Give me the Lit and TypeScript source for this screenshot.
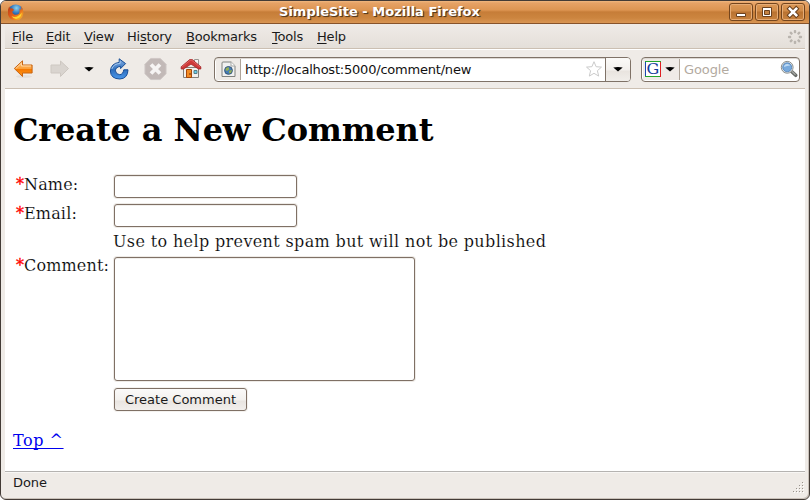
import { LitElement, html, css, svg } from "lit";
import { customElement, property } from "lit/decorators.js";

interface MenuEntry {
  before: string;
  key: string;
  after: string;
  width: number;
}

const MENUS: MenuEntry[] = [
  { before: "", key: "F", after: "ile", width: 34 },
  { before: "", key: "E", after: "dit", width: 38 },
  { before: "", key: "V", after: "iew", width: 43 },
  { before: "Hi", key: "s", after: "tory", width: 59 },
  { before: "", key: "B", after: "ookmarks", width: 86 },
  { before: "", key: "T", after: "ools", width: 45 },
  { before: "", key: "H", after: "elp", width: 40 },
];

@customElement("title-bar")
export class TitleBar extends LitElement {
  static styles = css`
    :host {
      display: flex;
      align-items: center;
      height: 22px;
      border-bottom: 1px solid #87532a;
      background: linear-gradient(#f0b77f 0, #e6a266 2px, #dd9552 9px, #c67d38 11px, #cc853f 17px, #d99553 22px);
    }
    svg { display: block; flex: none; }
    .logo { margin-left: 6px; }
    .title {
      flex: 1;
      text-align: center;
      padding-left: 6px;
      font: bold 13px/22px "DejaVu Sans", sans-serif;
      letter-spacing: 0;
      color: #fff;
      text-shadow: 1px 1px 0 #5b3c1e, 1px 1px 1px #5b3c1e;
      white-space: nowrap;
    }
    .buttons { display: flex; gap: 2px; padding-right: 4px; margin-top: 0; }
    .button {
      width: 22px;
      height: 16px;
      border: 1px solid #74451d;
      border-radius: 3px;
      box-shadow: inset 0 0 0 1px #e6ac76;
      background: linear-gradient(#dc9856 0, #d18b48 7px, #b97231 8px, #c9833e 100%);
    }
  `;
  render() {
    return html`
      <svg class="logo" width="17" height="17" viewBox="0 0 17 17">
        <defs>
          <radialGradient id="globe" cx=".55" cy=".25" r=".7">
            <stop offset="0" stop-color="#8ed4ee" /><stop offset=".5" stop-color="#2f74bb" /><stop offset="1" stop-color="#142a68" />
          </radialGradient>
          <linearGradient id="fox" x1="0" y1="0" x2="1" y2="1">
            <stop offset="0" stop-color="#b83a16" /><stop offset=".5" stop-color="#e4601a" /><stop offset="1" stop-color="#ffc52a" />
          </linearGradient>
        </defs>
        <circle cx="8.7" cy="7.8" r="7.4" fill="url(#globe)" />
        <path d="M2.1 2.6 3.3 4.4Q4.5 3.8 5.5 4.6L7.2 6 5.4 7.2Q5 9.4 7.2 10.6Q10 11.4 12.2 9.6Q13 7 12.4 4.6Q13.6 5.2 14 6.4Q14.8 4 13.8 2.3Q16.4 4.4 16.4 9Q15.8 15.8 9 16.3Q2.8 16.3 1 10.7Q.2 6.5 2.1 2.6Z" fill="url(#fox)" />
        <path d="M4.5 12Q10 15 14.8 8.5Q14.6 14.3 9 15Q6 14.6 4.5 12Z" fill="#ffd42c" />
      </svg>
      <span class="title">SimpleSite - Mozilla Firefox</span>
      <div class="buttons">
        <svg class="button" viewBox="0 0 22 16"><path d="M6.5 9.5h9v3h-9z" fill="#fff" stroke="#6c421f" /></svg>
        <svg class="button" viewBox="0 0 22 16"><path d="M6.5 3.5h9v9h-9z" fill="#fff" stroke="#6c421f" /><path d="M8.5 6.5h5v4h-5z" fill="#c58343" stroke="#6c421f" /></svg>
        <svg class="button" viewBox="0 0 22 16"><path d="m7.8 4.8 6.4 6.4m0-6.4-6.4 6.4" stroke="#6c421f" stroke-width="4.6" stroke-linecap="square" /><path d="m7.8 4.8 6.4 6.4m0-6.4-6.4 6.4" stroke="#fff" stroke-width="2.6" stroke-linecap="square" /></svg>
      </div>
    `;
  }
}

@customElement("menu-bar")
export class MenuBar extends LitElement {
  static styles = css`
    :host {
      display: flex;
      align-items: center;
      box-sizing: border-box;
      height: 26px;
      padding-left: 7px;
      border-bottom: 1px solid #fff;
      background: linear-gradient(#efebe7, #e4dfd9 24px, #cbbfb2 24px);
      font: 13px/25px "DejaVu Sans", sans-serif;
      letter-spacing: -0.2px;
      color: #1a1a1a;
    }
    .item { flex: none; white-space: nowrap; }
    .key { text-decoration: underline; text-underline-offset: 2px; text-decoration-thickness: 1px; text-decoration-skip-ink: none; }
    .throbber { margin-left: auto; margin-right: 2px; display: block; }
  `;
  render() {
    return html`
      ${MENUS.map((m) => html`<span class="item" style="width:${m.width}px">${m.before}<span class="key">${m.key}</span>${m.after}</span>`)}
      <svg class="throbber" width="16" height="16" viewBox="-8 -8 16 16">
        ${[0, 45, 90, 135, 180, 225, 270, 315].map((a) => svg`<rect x="-1.2" y="-7" width="2.4" height="3.2" rx=".8" fill="#b9b4ae" transform="rotate(${a})" />`)}
      </svg>
    `;
  }
}

@customElement("nav-bar")
export class NavBar extends LitElement {
  @property() address = "http://localhost:5000/comment/new";

  static styles = css`
    :host {
      display: flex;
      align-items: center;
      box-sizing: border-box;
      height: 39px;
      border-bottom: 1px solid #cbbfb2;
      background: #efebe7;
      font: 13px/21px "DejaVu Sans", sans-serif;
    }
    svg { display: block; flex: none; }
    .back { margin-left: 8px; }
    .forward { margin-left: 16px; }
    .history { margin-left: 14px; }
    .reload { margin-left: 15px; }
    .stop { margin-left: 13px; }
    .home { margin-left: 13px; }
    .box {
      display: flex;
      align-items: stretch;
      box-sizing: border-box;
      flex: none;
      height: 25px;
      border: 1px solid #7f7267;
      border-radius: 4px;
      background: #fff;
      box-shadow: inset 0 1px 0 #ddd8d3;
      overflow: hidden;
    }
    .url { width: 417px; margin-left: 12px; }
    .search { width: 159px; margin-left: 10px; }
    .side { display: flex; align-items: center; background: #efebe7; border-right: 1px solid #aea499; margin: 1px 0 1px 1px; }
    .site { width: 24px; padding-left: 0; }
    .site svg { margin-left: 5px; }
    .text { flex: 1; padding-left: 4px; line-height: 24px; white-space: nowrap; color: #111; letter-spacing: -0.21px; }
    .star { align-self: center; margin-right: 2px; }
    .drop {
      display: flex;
      align-items: center;
      justify-content: center;
      width: 24px;
      border-left: 1px solid #7f7267;
      background: linear-gradient(#fbfaf8, #f3f0ed 12px, #e9e4df 13px, #f1eeea);
    }
    .engine { width: 36px; gap: 4px; }
    .engine .g { margin-left: 2px; }
    .hint { flex: 1; padding-left: 4px; line-height: 24px; color: #b3aaa0; letter-spacing: -0.1px; }
    .lens { align-self: center; margin-right: 1px; }
  `;

  arrow(cls: string) {
    return html`<svg class=${cls} width="10" height="5" viewBox="0 0 10 5"><path d="M.3 .5Q5-.3 9.7 .5L5 4.6Z" fill="#000" /></svg>`;
  }

  render() {
    return html`
      <svg class="back" width="21" height="20" viewBox="0 0 21 20">
        <defs><linearGradient id="orange" x1="0" y1="0" x2="0" y2="1"><stop offset="0" stop-color="#ffc47b" /><stop offset=".5" stop-color="#fba03a" /><stop offset=".55" stop-color="#f57900" /><stop offset="1" stop-color="#ff9820" /></linearGradient></defs>
        <ellipse cx="11" cy="17.5" rx="8" ry="1.5" fill="#e4dfda" />
        <path d="M1.3 9.5 9.5 1.8V6H19.1V14H9.5V17.5Z" fill="url(#orange)" stroke="#c86411" stroke-linejoin="round" />
        <path d="M2.8 9.5 8.5 4.1V7H18" fill="none" stroke="#ffd6a2" />
      </svg>
      <svg class="forward" width="20" height="20" viewBox="0 0 20 20">
        <path d="M18.5 9.5 10.5 2V6H1V14H10.5V17.5Z" fill="#d9d4cf" stroke="#cdc7c1" stroke-linejoin="round" />
      </svg>
      ${this.arrow("history")}
      <svg class="reload" width="22" height="22" viewBox="0 0 22 22">
        <defs><linearGradient id="blue" x1="0" y1="0" x2="0" y2="1"><stop offset="0" stop-color="#86afe2" /><stop offset=".55" stop-color="#2f6fbd" /><stop offset="1" stop-color="#4a98ec" /></linearGradient></defs>
        <path d="M10.2 .8 16.6 5.6 11.6 10.6V8.4Q6.4 9 6.4 12.8Q7 16.6 10.8 16.7Q14 16.4 14.8 11.8H19Q18.8 20.5 10.8 21Q1.6 20.8 1.4 13Q2 5.4 10.2 4.4Z" fill="url(#blue)" stroke="#174d96" stroke-linejoin="round" />
        <path d="M11.2 2.8V5.4Q4.6 5.8 2.8 11" fill="none" stroke="#a3c6ee" />
      </svg>
      <svg class="stop" width="23" height="24" viewBox="0 0 24 24">
        <path d="M7 1H17L23 7V17L17 23H7L1 17V7Z" fill="#c2b9b7" stroke="#cfc8c5" stroke-linejoin="round" />
        <path d="m7.3 7.3 9.4 9.4m0-9.4-9.4 9.4" stroke="#f6f4f3" stroke-width="4" />
      </svg>
      <svg class="home" width="22" height="22" viewBox="0 0 22 22">
        <path d="M14.5 1.5h4v6h-4z" fill="#f7f7f6" stroke="#9a9894" />
        <path d="M3.5 9.5H18.5V19.5H3.5Z" fill="#f1f0ed" stroke="#82807b" />
        <path d="M6.5 11.5h5v8h-5z" fill="#f38c24" stroke="#a74708" /><path d="M10 15v2" stroke="#71300a" />
        <path d="M14 12.5h3v3h-3z" fill="#62d1ee" stroke="#577e88" />
        <path d="M1.2 8.8 9.7 1.6h2.6L20.8 8.8V11H18.5L11 6.1 3.5 11H1.2Z" fill="#cf3a39" stroke="#a22023" stroke-width=".8" />
        <path d="m2.2 8.8 8-6.5h1.6l8 6.5" fill="none" stroke="#dd6664" />
      </svg>
      <div class="box url">
        <div class="side site">
          <svg width="15" height="17" viewBox="0 0 15 17">
            <path d="M2 1H10.2L14 4.8V15.5H1V2Q1 1 2 1Z" fill="#f1f1f0" stroke="#80827e" stroke-linejoin="round" />
            <path d="M10 1V5H14" fill="#fff" stroke="#a5a6a3" />
            <circle cx="7.5" cy="9.4" r="3.9" fill="#467db5" stroke="#355579" />
            <path d="M5 7 7.5 6 8.2 8.5 6 10 4.5 9ZM8 10l3-1.3-.8 3-2 .8Z" fill="#98b052" />
          </svg>
        </div>
        <span class="text">${this.address}</span>
        <svg class="star" width="18" height="18" viewBox="0 0 18 18"><path d="M9 1.7 11.1 6.7 16.5 7.1 12.4 10.7 13.7 16.1 9 13.3 4.3 16.1 5.6 10.7 1.5 7.1 6.9 6.7Z" fill="#fff" stroke="#cacaca" stroke-linejoin="round" /></svg>
        <div class="drop">${this.arrow("down")}</div>
      </div>
      <div class="box search">
        <div class="side engine">
          <svg class="g" width="16" height="16" viewBox="0 0 16 16">
            <rect width="16" height="16" fill="#fff" /><path d="M.5 0V16" stroke="#1748b0" /><path d="M0 .5H16M0 15.5H16" stroke="#24a62b" /><path d="M15.5 1V16" stroke="#df2023" />
            <text x="1.4" y="13.4" font-family="DejaVu Serif, serif" font-size="15.5" textLength="12.8" lengthAdjust="spacingAndGlyphs" fill="#153b9c">G</text>
          </svg>
          ${this.arrow("down")}
        </div>
        <span class="hint">Google</span>
        <svg class="lens" width="18" height="18" viewBox="0 0 18 18">
          <path d="m11.3 11.3 4.4 4" stroke="#696c68" stroke-width="3.5" stroke-linecap="round" />
          <path d="m12 11.5 3.5 3.2" stroke="#a8aaa6" stroke-width="1.2" />
          <circle cx="7.2" cy="7.3" r="5.9" fill="#eef1f4" stroke="#8a8d89" />
          <circle cx="7.2" cy="7.3" r="4.5" fill="#78aadd" stroke="#4e7eb3" stroke-width=".8" />
          <path d="M4 7Q4 4.3 7.2 4Q9.5 4 10.2 5.5Q7 5.5 4 7Z" fill="#bfdbf5" />
        </svg>
      </div>
    `;
  }
}

@customElement("comment-page")
export class CommentPage extends LitElement {
  static styles = css`
    :host {
      display: block;
      box-sizing: border-box;
      height: 382px;
      padding: 22px 8px 0;
      background: #fff;
      color: #000;
      font: 16px/19px "DejaVu Serif", serif;
    }
    h1 { margin: 0; font-size: 32px; line-height: 38px; font-weight: bold; letter-spacing: -0.12px; white-space: nowrap; }
    .form {
      display: grid;
      grid-template-columns: 97px auto;
      justify-content: start;
      margin-top: 25px;
      padding-left: 3px;
      grid-template-rows: 29px 29px 23px 132px 28px;
    }
    .label, .note { -webkit-text-stroke: 0.15px #fff; }
    .label { padding-top: 1px; white-space: nowrap; letter-spacing: 0.16px; }
    .star { color: #f00; letter-spacing: 0; -webkit-text-stroke: 0.3px #f00; }
    .field, .area, .submit {
      display: block;
      box-sizing: border-box;
      margin: 0;
      border: 1px solid #7f7065;
      border-radius: 3px;
      outline: none;
      resize: none;
      background: #fff;
    }
    .field, .area { box-shadow: 0 0 0 1px #eeebe7, inset 0 1px 0 #f0eeeb; margin-left: 1px; }
    .field { width: 183px; height: 23px; margin-top: 1px; }
    .area { width: 301px; height: 124px; margin-top: 2px; }
    .note { white-space: nowrap; letter-spacing: 0.36px; }
    .submit {
      width: 133px;
      height: 23px;
      margin: 1px 0 0 1px;
      padding: 0;
      font: 13px/21px "DejaVu Sans", sans-serif;
      color: #1a1a1a;
      background: linear-gradient(#fbfaf9, #f3f1ee 11px, #e9e5e1 12px, #f2efec);
      box-shadow: 0 0 0 1px #f4f2ef;
    }
    .top { display: inline-block; margin-top: 16px; letter-spacing: 0.55px; color: #0000ee; text-decoration: underline; text-underline-offset: 2px; text-decoration-thickness: 1px; text-decoration-skip-ink: none; }
  `;
  render() {
    return html`
      <h1>Create a New Comment</h1>
      <div class="form">
        <label class="label"><span class="star">*</span>Name:</label><input class="field" />
        <label class="label"><span class="star">*</span>Email:</label><input class="field" />
        <span></span><span class="note">Use to help prevent spam but will not be published</span>
        <label class="label"><span class="star">*</span>Comment:</label><textarea class="area"></textarea>
        <span></span><button class="submit">Create Comment</button>
      </div>
      <a class="top">Top ^</a>
    `;
  }
}

@customElement("status-bar")
export class StatusBar extends LitElement {
  static styles = css`
    :host {
      display: flex;
      justify-content: space-between;
      align-items: flex-start;
      box-sizing: border-box;
      height: 27px;
      border-top: 1px solid #b5b3b1;
      box-shadow: inset 0 1px 0 #f8f6f4;
      padding-left: 8px;
      font: 13px/22px "DejaVu Sans", sans-serif;
      letter-spacing: -0.1px;
      color: #1a1a1a;
    }
    .grip { margin: 10px 1px 0 0; display: block; }
  `;
  render() {
    const dots = [[9, 0], [6, 3], [9, 3], [3, 6], [6, 6], [9, 6], [0, 9], [3, 9], [6, 9], [9, 9]];
    return html`
      <span>Done</span>
      <svg class="grip" width="11" height="11" viewBox="0 0 11 11">
        ${dots.map(([x, y]) => svg`<rect x=${x + 1} y=${y + 1} width="1" height="1" fill="#fff" /><rect x=${x} y=${y} width="1" height="1" fill="#99938c" />`)}
      </svg>
    `;
  }
}

@customElement("app-root")
export class AppRoot extends LitElement {
  static styles = css`
    :host { display: block; width: 810px; height: 500px; background: #fff; overflow: hidden; }
    .window {
      box-sizing: border-box;
      width: 810px;
      height: 500px;
      border: 1px solid #433b36;
      border-radius: 6px;
      background: #efebe7;
      box-shadow: inset -1px -1px 0 #c9c1b9;
      overflow: hidden;
    }
    .inner { margin: 0 4px; }
  `;
  render() {
    return html`
      <div class="window">
        <title-bar></title-bar>
        <div class="inner">
          <menu-bar></menu-bar>
          <nav-bar></nav-bar>
          <comment-page></comment-page>
          <status-bar></status-bar>
        </div>
      </div>
    `;
  }
}
